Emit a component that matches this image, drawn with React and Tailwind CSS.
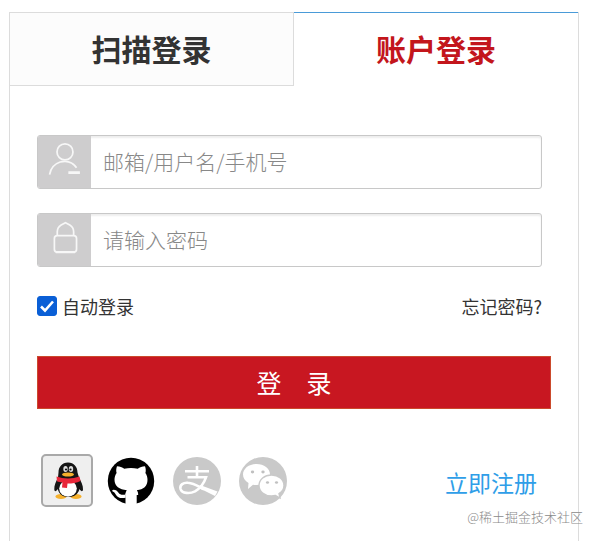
import React, { useState } from 'react';

function UserIcon() {
  return (
    <svg viewBox="0 0 54 54" className="h-full w-full" fill="none" stroke="#f7f7f7" strokeWidth="1.800">
      <circle cx="27.500" cy="16.500" r="8.300" />
      <path d="M11.500 40c1-6 5-11 11-13 6-1.500 13 0 17 6" />
      <path d="M31 38h12" strokeWidth="3" />
    </svg>
  );
}

function LockIcon() {
  return (
    <svg viewBox="0 0 54 54" className="h-full w-full" fill="none" stroke="#f7f7f7" strokeWidth="1.800">
      <path d="M19.500 22v-3.500c0-3 1.500-5.500 4-7l4.500-2.500 4.500 2.500c2.500 1.500 4 4 4 7V22" />
      <rect x="16.500" y="22.500" width="23" height="17" rx="3" />
      <path d="M18 39.500h20" strokeWidth="2.400" />
    </svg>
  );
}

function QQIcon() {
  return (
    <svg viewBox="0 0 48 49" className="h-full w-full">
      <ellipse cx="18" cy="40.500" rx="5.500" ry="2.500" fill="#f5b02c" />
      <ellipse cx="33" cy="40.500" rx="5.500" ry="2.500" fill="#f5b02c" />
      <path d="M25 6.500c-6 0-9.500 4.500-9.500 10l-.5 5c-2 4-4 8-3.700 12 .2 2.500 2 2 3.500-.5C16 38.500 20 41 25.500 41s9.500-2.500 11-8c1.500 2.500 3.300 3 3.500.5.300-4-2-8-4-12l-1.500-5C34.500 11 31 6.500 25 6.500z" fill="#151515" />
      <ellipse cx="25" cy="32.500" rx="8.800" ry="8.300" fill="#fff" />
      <ellipse cx="22.500" cy="13" rx="2.200" ry="3" fill="#ddd" />
      <ellipse cx="28" cy="13" rx="2.200" ry="3" fill="#ddd" />
      <circle cx="23" cy="13.500" r="1.100" fill="#111" />
      <circle cx="27.500" cy="13.500" r="1.100" fill="#111" />
      <ellipse cx="25" cy="18.500" rx="6" ry="2" fill="#f5b02c" />
      <path d="M13.500 20.500c7 2.500 16 2.500 23 0l1 4.500c-4 2-8 2.500-13 2.500l-.5 4.500-5-.5.5-5c-2-.2-4-.6-5.500-1.300z" fill="#e8273a" />
    </svg>
  );
}

function GithubIcon() {
  return (
    <svg viewBox="0 0 48 48" className="h-full w-full">
      <circle cx="24" cy="24" r="23.200" fill="#000" />
      <path
        d="M10 9.200c2.800 0 5.200 1 7.300 2.500 4.200-1 9.200-1 13.400 0 2.100-1.500 4.500-2.500 7.300-2.500.9 2.300 1 4.600.4 6.800 1.400 2 2.100 4.300 2.100 6.800 0 6.700-4 9.600-10.700 10.500 1 1.200 1.400 2.700 1.400 4.700H18.500v-.5c0-1.700.4-3.100 1.300-4.200C12.500 32.400 7.500 29.500 7.500 22.800c0-2.500.7-4.800 2.100-6.800-.6-2.200-.5-4.500.4-6.800z"
        fill="#fff"
      />
      <path d="M18.500 36.500h11.200V48H18.500z" fill="#fff" />
      <path d="M6.500 32.800c2.500 0 3.700 1 5 2.900 1.500 2 3.700 2.400 7.200 1.700v3.300c-5.200 1-8 0-9.800-3-.8-1.400-1.600-2.600-3.200-3.200-1-.6-.4-1.600.8-1.700z" fill="#fff" />
    </svg>
  );
}

function AlipayIcon() {
  return (
    <svg viewBox="0 0 48 48" className="h-full w-full">
      <circle cx="24" cy="24" r="24" fill="#c9c9c9" />
      <g fill="none" stroke="#fff" strokeWidth="2.600">
        <path d="M12 14.200h24M24 9v11" />
        <path d="M14.500 20.300h18.500c-2 6-6 11-11 14-5 2.500-13 2.500-14.500-2.500-1-4 3-6.500 7.500-6 6 .5 10 3.500 16 6.500" />
      </g>
      <path d="M27 28l17.500 6.500-2.500 4.500-16-8z" fill="#fff" />
    </svg>
  );
}

function WechatIcon() {
  return (
    <svg viewBox="0 0 48 48" className="h-full w-full">
      <circle cx="24" cy="24" r="24" fill="#c9c9c9" />
      <path d="M17.500 7C10 7 4 11.500 4 17.500c0 3.500 2 6.500 5.500 8.500L9 32l5-4.200c1 .2 2.300.2 3.500.2C25 28 31 23.500 31 17.500S25 7 17.500 7z" fill="#fff" />
      <path d="M32.500 18C25.500 18 20 22.500 20 28.500S25.500 39 32.500 39c1.500 0 2.700-.2 4-.5l4.500 2.500-1-4.500c3-1.800 5-4.500 5-8C45 22.500 39.500 18 32.500 18z" fill="#fff" stroke="#c9c9c9" strokeWidth="1.400" />
      <g fill="#c0c0c0">
        <ellipse cx="13.500" cy="15" rx="1.700" ry="1.400" />
        <ellipse cx="24" cy="15" rx="1.700" ry="1.400" />
        <ellipse cx="28.500" cy="25.500" rx="1.600" ry="1.300" />
        <ellipse cx="37.500" cy="25.500" rx="1.600" ry="1.300" />
      </g>
    </svg>
  );
}

function Field({ id, type, placeholder, icon }) {
  return (
    <div className="mr-[9px] flex h-[54px] overflow-hidden rounded-[3px] border border-[#c8c8c8] bg-white shadow-[inset_0_2px_2px_#eeeeee]">
      <label htmlFor={id} aria-label={placeholder} className="w-[53px] shrink-0 bg-[#cecdce]">
        {icon}
      </label>
      <input
        id={id}
        type={type}
        placeholder={placeholder}
        className="min-w-0 flex-1 bg-transparent px-3 text-[21px] font-light text-[#333] outline-none placeholder:text-[#888]"
      />
    </div>
  );
}

export default function App() {
  const [remember, setRemember] = useState(true);

  return (
    <div className="relative flex min-h-screen flex-col bg-white pt-3 pr-5 pl-[9px] font-['Noto_Sans_CJK_SC',sans-serif] text-[#333]">
      <div className="flex flex-1 flex-col border-x border-[#dcdcdc]">
        <div className="grid h-[74px] grid-cols-2 text-[30px] leading-10 font-bold">
          <button type="button" className="border-t border-r border-b border-[#dcdcdc] bg-[#fcfcfc] pb-0.5">
            扫描登录
          </button>
          <button type="button" className="border-t border-[#4a9bd8] pb-1 text-[#c3161c]">
            账户登录
          </button>
        </div>

        <form className="px-[27px] pt-[49px] pb-8" onSubmit={(e) => e.preventDefault()}>
          <div className="space-y-6">
            <Field id="account" type="text" placeholder="邮箱/用户名/手机号" icon={<UserIcon />} />
            <Field id="password" type="password" placeholder="请输入密码" icon={<LockIcon />} />
          </div>

          <div className="mt-6 mr-[9px] flex h-[30px] items-center justify-between text-lg">
            <label htmlFor="remember" className="flex items-center gap-[5px]">
              <span className="relative h-5 w-5">
                <input
                  id="remember"
                  type="checkbox"
                  checked={remember}
                  onChange={(e) => setRemember(e.target.checked)}
                  className="peer block h-5 w-5 appearance-none rounded-[3px] border border-[#767676] checked:border-[#0a5fd6] checked:bg-[#0a5fd6]"
                />
                <svg viewBox="0 0 20 20" className="pointer-events-none absolute inset-0 hidden h-5 w-5 peer-checked:block" fill="none" stroke="#fff" strokeWidth="2.600">
                  <path d="M4 10.500l4 4 8-9" />
                </svg>
              </span>
              自动登录
            </label>
            <a href="#forgot">忘记密码?</a>
          </div>

          <button type="submit" className="mt-[35px] h-[53px] w-full border border-[#cb4a2c] bg-[#c81721] text-[25px] text-white">
            登{'\u3000'}录
          </button>

          <div className="mt-[45px] flex items-end justify-between pr-[14px] pl-1">
            <div className="flex items-center">
              <a href="#qq" aria-label="QQ" className="h-[53px] w-[52px] rounded-[5px] border-2 border-[#a9a9a9] bg-[#efefef]">
                <QQIcon />
              </a>
              <a href="#github" aria-label="GitHub" className="ml-[14px] h-12 w-12">
                <GithubIcon />
              </a>
              <a href="#alipay" aria-label="Alipay" className="ml-[18px] h-12 w-12">
                <AlipayIcon />
              </a>
              <a href="#wechat" aria-label="WeChat" className="ml-[18px] h-12 w-12">
                <WechatIcon />
              </a>
            </div>
            <a href="#register" className="text-[23px] leading-[50px] text-[#2f9ee8]">立即注册</a>
          </div>
        </form>
      </div>

      <span className="absolute right-4 bottom-3 text-[13px] leading-6 font-light text-[#8a8a8a]">@稀土掘金技术社区</span>
    </div>
  );
}
